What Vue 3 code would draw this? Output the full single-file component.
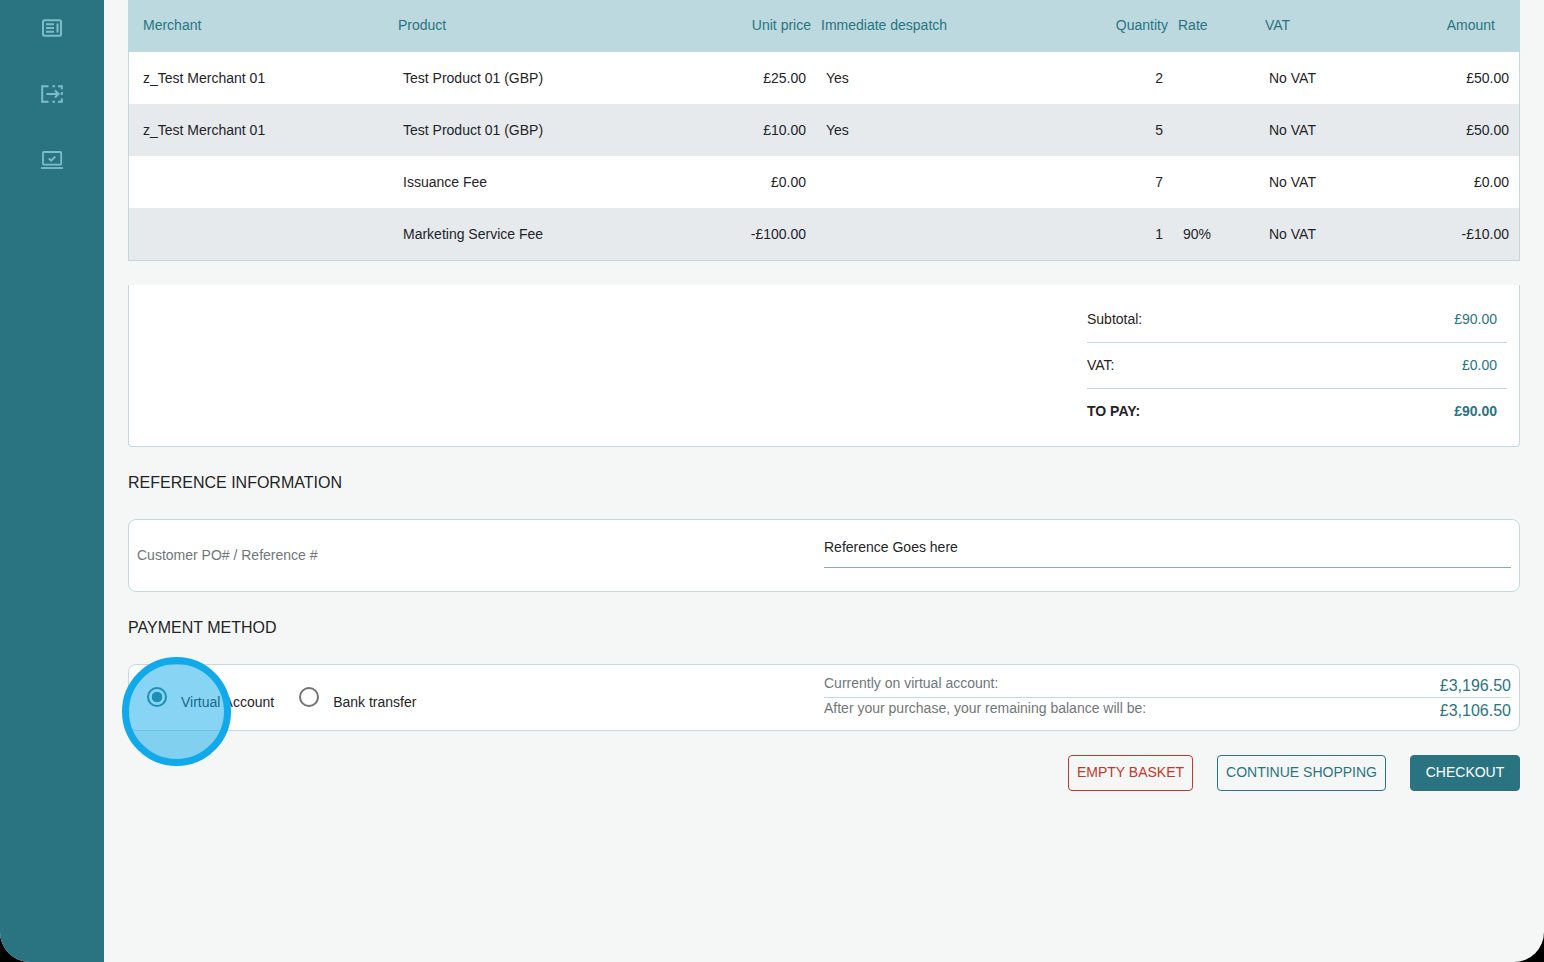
<template>
  <div class="screen">
    <aside class="sidebar">
      <svg class="nav-icon" viewBox="0 0 22 18" fill="none" stroke="#7dbdc9" stroke-width="2">
        <rect x="2" y="1.2" width="18" height="15.6" rx="1.5" />
        <path d="M5 5.2h8M5 9h8M5 12.8h8M16.5 4.5v9" />
      </svg>
      <svg class="nav-icon" viewBox="0 0 22 18" fill="none" stroke="#7dbdc9" stroke-width="2">
        <path d="M7.5 1.2H1.2v15.6h6.3" />
        <path d="M11.5 1.2h2.5M17 1.2h3.8v3M20.8 7v3M20.8 13.5v3.3H17M14 16.8h-2.5" />
        <path d="M5.5 9h12M14 5.5L17.5 9 14 12.5" />
      </svg>
      <svg class="nav-icon" viewBox="0 0 22 18" fill="none" stroke="#7dbdc9" stroke-width="1.8">
        <rect x="2" y="1" width="18.2" height="12.6" rx="0.8" />
        <path d="M0 17h22" />
        <path d="M7.8 7.4l2.3 2.2 4.2-4" stroke-width="2" />
      </svg>
    </aside>

    <main class="content">
      <div class="table">
        <div class="table-row table-head">
          <div class="c-merchant">Merchant</div>
          <div class="c-product">Product</div>
          <div class="c-unit">Unit price</div>
          <div class="c-despatch">Immediate despatch</div>
          <div class="c-qty">Quantity</div>
          <div class="c-rate">Rate</div>
          <div class="c-vat">VAT</div>
          <div class="c-amount">Amount</div>
        </div>
        <div v-for="row in rows" :key="row.product + row.unit" class="table-row table-body">
          <div class="c-merchant">{{ row.merchant }}</div>
          <div class="c-product">{{ row.product }}</div>
          <div class="c-unit">{{ row.unit }}</div>
          <div class="c-despatch">{{ row.despatch }}</div>
          <div class="c-qty">{{ row.qty }}</div>
          <div class="c-rate">{{ row.rate }}</div>
          <div class="c-vat">No VAT</div>
          <div class="c-amount">{{ row.amount }}</div>
        </div>
      </div>

      <div class="summary-card">
        <div class="summary">
          <div class="summary-row">
            <span>Subtotal:</span>
            <span class="teal">£90.00</span>
          </div>
          <div class="summary-row">
            <span>VAT:</span>
            <span class="teal">£0.00</span>
          </div>
          <div class="summary-row total">
            <span>TO PAY:</span>
            <span class="teal">£90.00</span>
          </div>
        </div>
      </div>

      <h2 class="section-title">REFERENCE INFORMATION</h2>
      <div class="card ref-card">
        <div class="ref-label">Customer PO# / Reference #</div>
        <div class="ref-input">Reference Goes here</div>
      </div>

      <h2 class="section-title">PAYMENT METHOD</h2>
      <div class="card pay-card">
        <div class="radios">
          <label class="radio">
            <span class="dot checked"></span>
            <span class="radio-text">Virtual Account</span>
          </label>
          <label class="radio">
            <span class="dot"></span>
            <span class="radio-text">Bank transfer</span>
          </label>
        </div>
        <div class="balance">
          <div class="balance-row first">
            <span>Currently on virtual account:</span>
            <b>£3,196.50</b>
          </div>
          <div class="balance-row">
            <span>After your purchase, your remaining balance will be:</span>
            <b>£3,106.50</b>
          </div>
        </div>
      </div>

      <div class="actions">
        <button class="btn btn-danger">EMPTY BASKET</button>
        <button class="btn btn-outline">CONTINUE SHOPPING</button>
        <button class="btn btn-primary">CHECKOUT</button>
      </div>
    </main>

    <div class="click-mark"></div>
  </div>
</template>

<script setup>
const rows = [
  { merchant: 'z_Test Merchant 01', product: 'Test Product 01 (GBP)', unit: '£25.00', despatch: 'Yes', qty: 2, rate: '', amount: '£50.00' },
  { merchant: 'z_Test Merchant 01', product: 'Test Product 01 (GBP)', unit: '£10.00', despatch: 'Yes', qty: 5, rate: '', amount: '£50.00' },
  { merchant: '', product: 'Issuance Fee', unit: '£0.00', despatch: '', qty: 7, rate: '', amount: '£0.00' },
  { merchant: '', product: 'Marketing Service Fee', unit: '-£100.00', despatch: '', qty: 1, rate: '90%', amount: '-£10.00' }
]
</script>

<style>
html,
body {
  margin: 0;
  background: #000;
}
</style>

<style scoped>
.screen {
  position: relative;
  display: flex;
  height: 962px;
  overflow: hidden;
  border-radius: 0 0 30px 30px;
  background: #f5f7f6;
  font-family: "Liberation Sans", Arial, sans-serif;
  font-size: 14px;
  color: #1f2426;
}

.sidebar {
  flex: 0 0 104px;
  display: flex;
  flex-direction: column;
  align-items: center;
  gap: 48px;
  padding-top: 19px;
  background: #2a7482;
}

.nav-icon {
  width: 22px;
  height: 18px;
}

.content {
  flex: 1;
  padding: 0 24px;
  min-width: 0;
}

.table {
  border: 1px solid #c3d9dd;
  border-top: none;
}

.table-row {
  display: grid;
  grid-template-columns: 264px 300px 123px 244px 113px 87px 120px 139px;
  align-items: center;
  height: 52px;
}

.table-head {
  box-sizing: border-box;
  margin: 0 -1px;
  padding: 0 1px 2px;
  background: #bcd9df;
  color: #2a7482;
}

.table-body {
  background: #fff;
}

.table-body:nth-child(odd) {
  background: #e6eaed;
}

.c-merchant {
  padding-left: 14px;
}

.c-product,
.c-despatch,
.c-rate {
  padding-left: 10px;
}

.c-vat {
  padding-left: 9px;
}

.c-unit,
.c-qty,
.c-amount {
  padding-right: 10px;
  text-align: right;
}

.table-head .c-product,
.table-head .c-despatch,
.table-head .c-rate,
.table-head .c-vat {
  padding-left: 5px;
}

.table-head .c-unit,
.table-head .c-qty {
  padding-right: 5px;
}

.table-head .c-amount {
  padding-right: 24px;
}

.summary-card {
  display: flex;
  justify-content: flex-end;
  margin-top: 24px;
  padding: 12px 12px 13px;
  background: #fff;
  border: 1px solid #c3d9dd;
  border-top: none;
  border-radius: 0 0 4px 4px;
}

.summary {
  width: 420px;
}

.summary-row {
  display: flex;
  justify-content: space-between;
  align-items: center;
  box-sizing: border-box;
  height: 46px;
  padding: 0 10px 2px 0;
  border-bottom: 1px solid #c3d9dd;
}

.summary-row.total {
  height: 44px;
  padding-bottom: 0;
  border-bottom: none;
  font-weight: 700;
}

.teal {
  color: #2a7482;
}

.section-title {
  margin: 26px 0 26px;
  font-size: 16px;
  font-weight: 400;
  line-height: 20px;
  color: #1f2426;
}

.card {
  display: grid;
  grid-template-columns: 1fr 1fr;
  padding: 0 8px;
  background: #fff;
  border: 1px solid #c3d9dd;
  border-radius: 8px;
}

.ref-card {
  height: 73px;
  box-sizing: border-box;
  align-items: center;
}

.ref-label {
  padding-bottom: 2px;
  color: #6f7779;
}

.ref-input {
  align-self: start;
  height: 40px;
  margin-top: 8px;
  box-sizing: border-box;
  border-bottom: 1px solid #7fb0bc;
  line-height: 38px;
}

.pay-card {
  height: 67px;
  box-sizing: border-box;
}

.radios {
  display: flex;
  gap: 25px;
  padding: 22px 0 0 10px;
}

.radio {
  display: flex;
}

.dot {
  box-sizing: border-box;
  width: 20px;
  height: 20px;
  margin-right: 14px;
  border: 2px solid #737373;
  border-radius: 50%;
  background: #fff;
}

.dot.checked {
  border-color: #2a7482;
  background: radial-gradient(circle, #2a7482 0 5px, #fff 5.6px);
}

.radio-text {
  margin-top: 7px;
  line-height: 16px;
}

.balance {
  padding-top: 10px;
}

.balance-row {
  display: flex;
  justify-content: space-between;
  align-items: flex-start;
  padding-top: 2px;
  line-height: 16px;
  color: #6f7779;
}

.balance-row.first {
  height: 23px;
  padding-top: 0;
  box-sizing: border-box;
  border-bottom: 1px solid #c3d9dd;
}

.balance-row b {
  margin-top: 2px;
  font-size: 16px;
  font-weight: 400;
  line-height: 18px;
  color: #2a7482;
}

.actions {
  display: flex;
  justify-content: flex-end;
  gap: 24px;
  margin-top: 24px;
}

.btn {
  height: 36px;
  padding: 0 0 2px;
  border-radius: 4px;
  font-family: inherit;
  font-size: 14px;
  background: transparent;
}

.btn-danger {
  width: 125px;
  border: 1px solid #c0392b;
  color: #c0392b;
}

.btn-outline {
  width: 169px;
  border: 1px solid #2a7482;
  color: #2a7482;
}

.btn-primary {
  width: 110px;
  border: 1px solid #2a7482;
  background: #2a7482;
  color: #fff;
}

.click-mark {
  position: absolute;
  left: 122px;
  top: 657px;
  box-sizing: border-box;
  width: 109px;
  height: 109px;
  border: 7px solid #10a9ea;
  border-radius: 50%;
  background: rgba(16, 169, 234, 0.5);
}
</style>
